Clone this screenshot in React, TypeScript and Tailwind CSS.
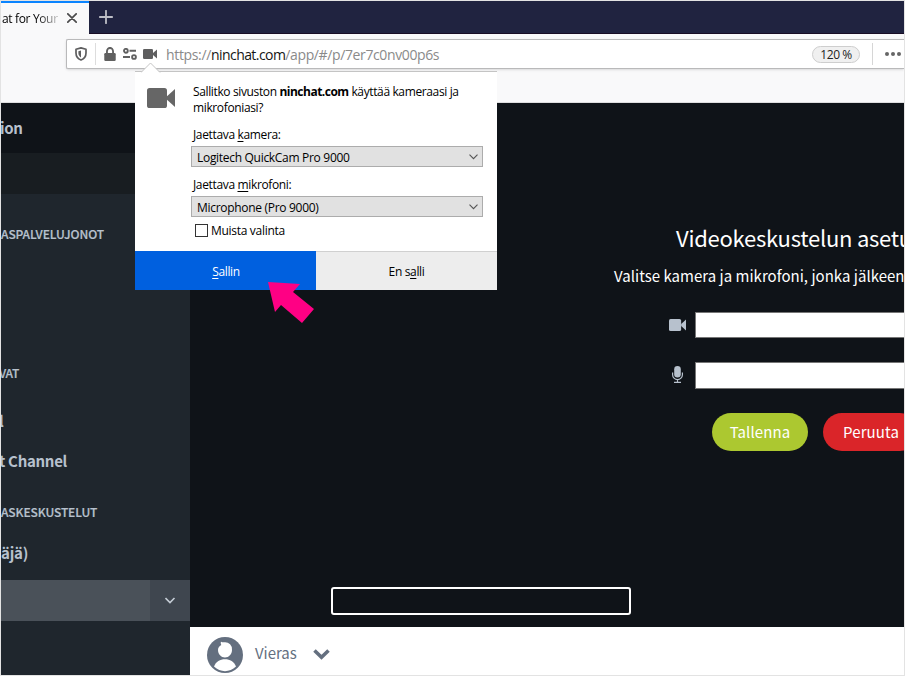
import React from 'react';

const ui = "font-['Open_Sans','Noto_Sans',sans-serif]";
const source = "font-['Noto_Sans_CJK_SC','Open_Sans',sans-serif]";
const groupLabel = 'flex h-[20px] shrink-0 items-center text-[12px] font-medium [-webkit-text-stroke:0.2px_#b7c1cd]';
const channel = 'flex h-[22px] shrink-0 items-center text-[15px] font-bold';

function CameraIcon({ className }: { className: string }) {
  return (
    <svg viewBox="0 0 28 20" preserveAspectRatio="none" className={className} fill="currentColor">
      <rect x="0" y="0" width="20" height="20" rx="2.6" />
      <path d="M20 8.2 28 1v18l-8-7.2z" />
    </svg>
  );
}

function TabBar() {
  return (
    <div className="flex h-[33px] shrink-0 border-b border-[#180d25] bg-[#202340]">
      <div className="-mb-px flex h-[33px] w-[88px] shrink-0 items-center border-t-2 border-[#0a84ff] bg-[#f9f9fa]">
        <div className={`${ui} flex w-[61px] shrink-0 items-center pt-px pl-px text-[12px] leading-[16px] whitespace-nowrap`}>
          <span className="bg-linear-to-r from-black from-55% to-[#c8c8c8] bg-clip-text tracking-[-0.35px] text-transparent">at for Your</span>
        </div>
        <svg className="-mt-px ml-[5px] h-[10px] w-[10px] shrink-0" viewBox="0 0 10 10" fill="none" stroke="#4b4b4c" strokeWidth="1.7" strokeLinecap="round">
          <path d="M.8.8 9.2 9.2M9.2.8.8 9.2" />
        </svg>
      </div>
      <svg className="mt-[9px] ml-[10px] h-[14px] w-[14px]" viewBox="0 0 14 14" stroke="#bdbec6" strokeWidth="1.8" strokeLinecap="round">
        <path d="M7 .8v12.4M.8 7h12.4" />
      </svg>
    </div>
  );
}

function AddressBar() {
  return (
    <div className="flex h-[69px] shrink-0 flex-col border-b border-[#dededf] bg-[#f9f9fa] pt-[5px] pl-[65px]">
      <div className="flex h-[30px] items-center rounded-l-[2px] border border-r-0 border-[#b9b9ba] bg-white shadow-sm">
        <svg className="ml-[8px] h-[14px] w-[12px] shrink-0" viewBox="0 0 12 14" fill="none">
          <path d="M6 .9 11 2.3V6c0 3.4-2.2 5.9-5 7-2.8-1.1-5-3.6-5-7V2.3z" stroke="#5e5e5f" strokeWidth="1.7" strokeLinejoin="round" />
          <path d="M6 3.6v6.9C4.400 9.600 3.400 7.900 3.400 6V4.200z" fill="#5e5e5f" />
        </svg>
        <div className="ml-[8px] h-[22px] w-px bg-[#dddddd]" />
        <svg className="ml-[8px] h-[14px] w-[12px] shrink-0" viewBox="0 0 13 14" preserveAspectRatio="none">
          <path d="M3.200 7V4.200a3.300 3.300 0 0 1 6.600 0V7" fill="none" stroke="#606060" strokeWidth="2" />
          <rect x=".3" y="6" width="12.400" height="8" rx="1.300" fill="#606060" />
        </svg>
        <svg className="ml-[7px] h-[12px] w-[14px] shrink-0" viewBox="0 0 14 12" fill="none" stroke="#606060" strokeWidth="1.900">
          <circle cx="2.900" cy="2.800" r="1.900" />
          <path d="M6.500 2.800H13M0 9h7" />
          <circle cx="11" cy="9" r="1.900" />
        </svg>
        <CameraIcon className="ml-[6px] h-[10px] w-[14px] shrink-0 text-[#5e5e5f]" />
        <div className={`${ui} ml-[9px] pt-[2px] text-[14px] leading-[20px] whitespace-nowrap text-[#8a8a8a]`}>
          <span className="tracking-[-0.35px]">https://</span>
          <span className="tracking-[-0.56px] text-[#151515]">ninchat.com</span>
          <span className="tracking-[-0.38px]">/app/#/p/7er7c0nv00p6s</span>
        </div>
        <div className={`${ui} mr-[12px] ml-auto flex h-[17px] w-[48px] shrink-0 items-center justify-center rounded-full border border-[#cecece] bg-[#f0f0f0] pt-px text-[12px] tracking-[-0.45px] text-[#222]`}>120 %</div>
        <div className="h-[22px] w-px bg-[#d6d6d6]" />
        <div className="mr-[3px] ml-[12px] flex shrink-0 gap-[2px]">
          <i className="h-[4px] w-[4px] rounded-full bg-[#666]" />
          <i className="h-[4px] w-[4px] rounded-full bg-[#666]" />
          <i className="h-[4px] w-[4px] rounded-full bg-[#666]" />
        </div>
      </div>
    </div>
  );
}

function Sidebar() {
  return (
    <aside className={`${source} flex w-[189px] shrink-0 flex-col bg-[#1f262d] whitespace-nowrap text-[#b7c1cd]`}>
      <div className="flex h-[50px] shrink-0 items-center bg-[#0f1318]">
        <div className="-ml-px pt-px text-[15px] font-bold tracking-[-0.3px]">ion</div>
      </div>
      <div className="h-[41px] shrink-0 bg-[#181d21]" />
      <div className={`${groupLabel} mt-[30px] tracking-[-0.08px]`}>ASPALVELUJONOT</div>
      <div className={`${groupLabel} -ml-[2px] mt-[119px] tracking-[-0.3px]`}>VAT</div>
      <div className={`${channel} mt-[27px]`}><span className="-ml-[2px]">l</span></div>
      <div className={`${channel} -ml-[2px] mt-[18px] tracking-[-0.3px]`}>t Channel</div>
      <div className={`${groupLabel} mt-[30px] tracking-[-0.1px]`}>ASKESKUSTELUT</div>
      <div className={`${channel} mt-[20px] tracking-[-0.2px]`}>äjä)</div>
      <div className="mt-[16px] flex h-[41px] shrink-0 bg-[#4a5159]">
        <div className="ml-auto flex w-[40px] items-center justify-center bg-[#3f464f]">
          <svg className="h-[7px] w-[11px]" viewBox="0 0 11 7" fill="none" stroke="#c4ccd5" strokeWidth="1.6"><path d="M.5 1 5 5.500 9.500 1" /></svg>
        </div>
      </div>
    </aside>
  );
}

function MainPanel() {
  return (
    <main className={`${source} flex min-w-0 flex-1 flex-col overflow-hidden whitespace-nowrap`}>
      <section className="flex h-[524px] shrink-0 flex-col bg-[#0f1318] text-white">
        <h1 className="mt-[118px] ml-[486px] h-[32px] text-[22px] leading-[32px] tracking-[-0.25px]">Videokeskustelun asetu</h1>
        <p className="mt-[11px] ml-[424px] h-[24px] text-[15px] leading-[24px] tracking-[0.02px]">Valitse kamera ja mikrofoni, jonka jälkeen</p>
        <div className="mt-[24px] ml-[479px] flex h-[26px] shrink-0 items-center">
          <CameraIcon className="h-[12px] w-[17px] shrink-0 text-[#b7c1cd]" />
          <div className="ml-[9px] h-[26px] w-[260px] shrink-0 border border-[#767676] bg-white" />
        </div>
        <div className="mt-[24px] ml-[482px] flex h-[27px] shrink-0 items-center">
          <svg className="-mt-[3px] h-[17px] w-[11px] shrink-0" viewBox="0 0 11 17" fill="none" stroke="#b7c1cd">
            <rect x="2.200" y="0" width="6.600" height="11.500" rx="3.300" fill="#b7c1cd" stroke="none" />
            <path d="M.6 6.500v2.200a4.900 4.900 0 0 0 9.800 0V6.500M5.500 13.600v2.600M2 16.300h7" strokeWidth="1.200" />
          </svg>
          <div className="ml-[12px] h-[27px] w-[260px] shrink-0 border border-[#767676] bg-white" />
        </div>
        <div className="mt-[24px] ml-[522px] flex h-[38px] shrink-0 gap-[15px] text-[15px] tracking-[0.1px]">
          <div className="flex w-[96px] shrink-0 items-center justify-center rounded-full bg-[#acc830]">Tallenna</div>
          <div className="flex w-[96px] shrink-0 items-center justify-center rounded-full bg-[#da2529]">Peruuta</div>
        </div>
        <div className="mt-[136px] ml-[141px] h-[28px] w-[300px] shrink-0 rounded-[3px] border-2 border-white" />
      </section>
      <footer className="flex flex-1 bg-white text-[#646f7f]">
        <svg className="mt-[10px] ml-[17px] h-[36px] w-[36px]" viewBox="0 0 36 36">
          <circle cx="18" cy="18" r="18" fill="currentColor" />
          <path d="M14 4.500c.7 1 1.500.7 3.500.7A7 7 0 0 1 25 13c0 4.200-3.200 7.500-7 7.500S11 17.200 11 13c0-2 1-4 3.300-5-.6-1-.8-2.300-.3-3.500z" fill="white" />
          <path d="M7 29.500c2-5 6-7.300 11-7.300s9 2.300 11 7.300c-6.500 6.200-15.500 6.200-22 0z" fill="white" />
        </svg>
        <div className="mt-[14px] ml-[12px] text-[15px] leading-[24px] tracking-[-0.05px]">Vieras</div>
        <svg className="mt-[22px] ml-[16px] h-[11px] w-[17px]" viewBox="0 0 17 11" fill="none" stroke="currentColor" strokeWidth="3.600"><path d="m1.500 1.500 7 6.700 7-6.700" /></svg>
      </footer>
    </main>
  );
}

function DeviceSelect({ value }: { value: string }) {
  return (
    <div className="ml-[56px] flex h-[21px] w-[292px] items-center justify-between border border-[#acacac] bg-[#e1e1e1] pr-[4px] pl-[5px]">
      <span className="pt-[2px] tracking-[-0.3px]">{value}</span>
      <svg className="mt-px h-[6px] w-[9px]" viewBox="0 0 9 6" fill="none" stroke="#555" strokeWidth="1.1"><path d="m.5.700 4 4 4-4" /></svg>
    </div>
  );
}

function PermissionPopup() {
  return (
    <div className={`${ui} absolute top-[70px] left-[134px] flex h-[219px] w-[362px] flex-col border-t border-[#c4c4c4] bg-white text-[12px] leading-[16px] tracking-[-0.35px] whitespace-nowrap text-black`}>
      <svg className="absolute -top-[10px] left-[6px] h-[11px] w-[20px]" viewBox="0 0 20 11"><path d="M0 10.500 9.500 1 19 10.500" fill="white" stroke="#c4c4c4" /><path d="M1 10.500h17" stroke="white" /></svg>
      <div className="flex pt-[12px]">
        <CameraIcon className="mt-[4px] ml-[12px] h-[20px] w-[28px] shrink-0 text-[#666]" />
        <div className="ml-[18px] tracking-[-0.37px]">Sallitko sivuston <b className="tracking-[-0.5px]">ninchat.com</b> käyttää kameraasi ja<br />mikrofoniasi?</div>
      </div>
      <div className="mt-[11px] mb-[3px] ml-[58px]">Jaettava <u className="underline-offset-2">k</u>amera:</div>
      <DeviceSelect value="Logitech QuickCam Pro 9000" />
      <div className="mt-[10px] mb-[3px] ml-[58px]">Jaettava <u className="underline-offset-2">m</u>ikrofoni:</div>
      <DeviceSelect value="Microphone (Pro 9000)" />
      <div className="mt-[6px] ml-[60px] flex items-center gap-[3px] tracking-[-0.3px]">
        <span className="-mt-px h-[13px] w-[13px] border border-[#333] bg-white" />Muista valinta
      </div>
      <div className="mt-auto flex h-[39px] shrink-0">
        <div className="w-[181px] bg-[#0060df] pt-[13px] pl-px text-center text-white"><u className="underline-offset-2">S</u>allin</div>
        <div className="flex-1 border-t border-[#d0d0d0] bg-[#ededed] pt-[12px] text-center">En s<u className="underline-offset-2">a</u>lli</div>
      </div>
      <svg className="absolute top-[209px] left-[132px] h-[44px] w-[48px]" viewBox="0 0 48 44"><path d="M1 1 33 3 26 11 47 28 35 42 14 24 8 31z" fill="#ff0084" /></svg>
    </div>
  );
}

export default function App() {
  return (
    <div className="relative flex h-[676px] w-[905px] flex-col overflow-hidden border border-[#e3e3e3] bg-white">
      <TabBar />
      <AddressBar />
      <div className="flex min-h-0 flex-1">
        <Sidebar />
        <MainPanel />
      </div>
      <PermissionPopup />
    </div>
  );
}
